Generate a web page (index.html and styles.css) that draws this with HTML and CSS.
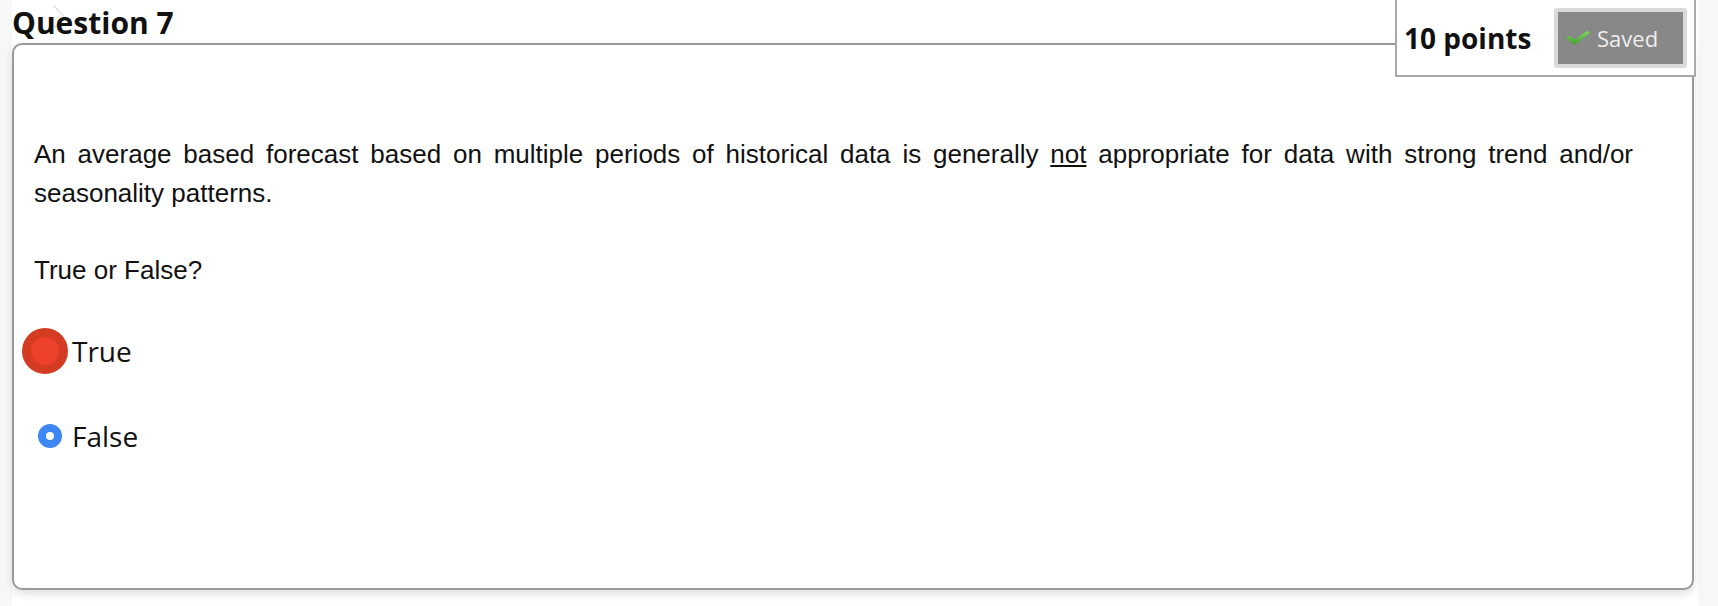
FILE: index.html
```html
<html>

<head>
    <meta charset="UTF-8">
    <meta name="viewport" content="width=device-width, initial-scale=1.0">
    <title>Question 7</title>
    <link rel="stylesheet" href="styles.css">
</head>

<body>
    <div class="page">
        <svg class="chevron" width="14" height="26" viewBox="0 0 14 26">
            <path d="M2 2 L12 13 L2 24" fill="none" stroke="#d0d0d0" stroke-width="1.2" stroke-dasharray="2 1"/>
        </svg>
        <h2 class="question-title">Question 7</h2>

        <div class="points-box">
            <span class="points">10 points</span>
            <div class="saved-btn">
                <svg class="check" width="24" height="14" viewBox="0 0 24 14">
                    <defs>
                        <linearGradient id="green" x1="0" y1="0" x2="0" y2="1">
                            <stop offset="0" stop-color="#7fd85f"/>
                            <stop offset="1" stop-color="#3f9d2c"/>
                        </linearGradient>
                    </defs>
                    <polygon points="0,7 3,4.5 8.5,8.5 21,0 24,2 8.5,14" fill="url(#green)"/>
                </svg>
                <span>Saved</span>
            </div>
        </div>

        <div class="question-card">
            <p class="question-text">An average based forecast based on multiple periods of historical data is generally <u>not</u> appropriate for data with strong trend and/or seasonality patterns.</p>
            <p class="question-text">True or False?</p>

            <div class="options">
                <label class="option">
                    <span class="radio"></span>
                    <span class="option-label">True</span>
                    <span class="click-marker"></span>
                </label>
                <label class="option">
                    <span class="radio checked"></span>
                    <span class="option-label">False</span>
                </label>
            </div>
        </div>
    </div>
</body>

</html>
```

FILE: styles.css
```css
body {
    margin: 0;
    background-color: #f7f7f7;
}

.page {
    position: relative;
    box-sizing: border-box;
    margin-left: 12px;
    width: 1686px;
    min-height: 606px;
    padding-top: 3px;
    background: #fff;
}

.chevron {
    position: absolute;
    left: 40px;
    top: 4px;
}

.question-title {
    position: relative;
    margin: 0;
    font-family: "Open Sans", sans-serif;
    font-weight: 700;
    font-size: 30px;
    line-height: 40px;
    color: #111;
}

.points-box {
    position: absolute;
    top: -2px;
    right: 2px;
    box-sizing: border-box;
    width: 301px;
    display: flex;
    align-items: center;
    justify-content: space-between;
    padding: 8px 7px 7px 7px;
    border: 2px solid #aaa;
    background: #fff;
}

.points {
    font-family: "Open Sans", sans-serif;
    font-weight: 700;
    font-size: 28px;
    color: #111;
}

.saved-btn {
    box-sizing: border-box;
    width: 133px;
    height: 60px;
    display: flex;
    align-items: center;
    gap: 7px;
    padding-left: 8px;
    border: 4px solid #dadada;
    border-radius: 3px;
    background: #888;
    color: #eee;
    font-family: "Open Sans", sans-serif;
    font-size: 22px;
}

.question-card {
    box-sizing: border-box;
    width: 1682px;
    padding: 90px 59px 132px 20px;
    border: 2px solid #999;
    border-radius: 10px;
    box-shadow: 0 4px 8px rgba(0, 0, 0, 0.12);
}

.question-text {
    margin: 0 0 38.5px;
    font-family: "Liberation Sans", Arial, sans-serif;
    font-size: 26px;
    line-height: 38.5px;
    text-align: justify;
    color: #111;
}

.question-text:last-of-type {
    margin-bottom: 0;
}

.options {
    display: flex;
    flex-direction: column;
    gap: 45px;
    margin-top: 42px;
}

.option {
    position: relative;
    display: flex;
    align-items: center;
    gap: 10px;
    padding-left: 4px;
    font-family: "Open Sans", sans-serif;
    font-size: 28px;
    line-height: 40px;
    color: #111;
}

.radio {
    box-sizing: border-box;
    width: 24px;
    height: 24px;
    border: 1px solid #999;
    border-radius: 50%;
    background: #fff;
}

.radio.checked {
    border: 8px solid #3e87f3;
    background: #fff;
}

.click-marker {
    position: absolute;
    left: -12px;
    top: -3px;
    box-sizing: border-box;
    width: 46px;
    height: 46px;
    border: 9px solid #d43b23;
    border-radius: 50%;
    background: #ee4129;
}
```
